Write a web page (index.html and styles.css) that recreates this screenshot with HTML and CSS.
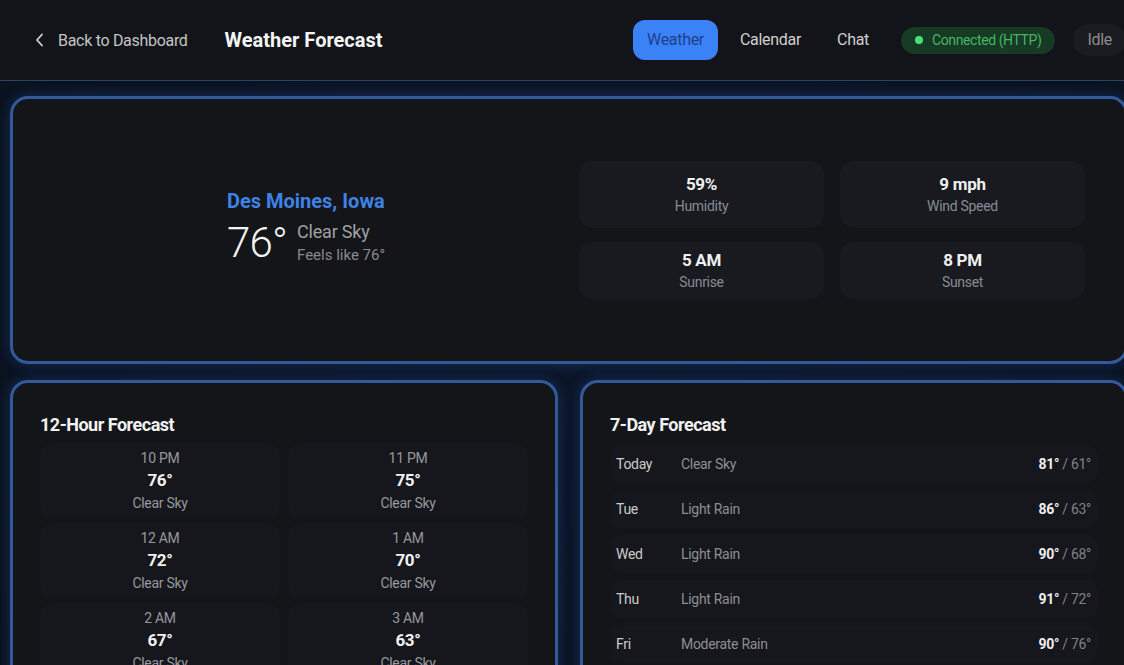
FILE: index.html
```html
<!DOCTYPE html>
<html lang="en">
<head>
<meta charset="utf-8">
<title>Weather Forecast</title>
<link rel="stylesheet" href="styles.css">
</head>
<body>
<div class="page">
  <header class="topbar">
    <div class="left">
      <a class="back" href="#">
        <svg class="chev" width="9" height="14" viewBox="0 0 9 14"><path d="M7 1.5 L2 7 L7 12.5" fill="none" stroke="#d4d4d4" stroke-width="1.8" stroke-linecap="round" stroke-linejoin="round"/></svg>
        <span>Back to Dashboard</span>
      </a>
      <h1 class="title">Weather Forecast</h1>
    </div>
    <div class="right">
      <nav class="tabs">
        <a class="tab active" href="#">Weather</a>
        <a class="tab" href="#">Calendar</a>
        <a class="tab" href="#">Chat</a>
      </nav>
      <span class="conn"><span class="dot"></span>Connected (HTTP)</span>
      <span class="idle">Idle</span>
    </div>
  </header>

  <main class="main">
    <section class="card current">
      <div class="loc-col">
        <div class="loc">
          <div class="city">Des Moines, Iowa</div>
          <div class="temp-row">
            <div class="big-temp">76°</div>
            <div class="cond">
              <div class="cond-main">Clear Sky</div>
              <div class="feels">Feels like 76°</div>
            </div>
          </div>
        </div>
      </div>
      <div class="stats">
        <div class="stat"><div class="sv">59%</div><div class="sl">Humidity</div></div>
        <div class="stat"><div class="sv">9 mph</div><div class="sl">Wind Speed</div></div>
        <div class="stat"><div class="sv">5 AM</div><div class="sl">Sunrise</div></div>
        <div class="stat"><div class="sv">8 PM</div><div class="sl">Sunset</div></div>
      </div>
    </section>

    <div class="lower">
      <section class="card panel">
        <h2 class="ptitle">12-Hour Forecast</h2>
        <div class="hours">
          <div class="hour"><div class="ht">10 PM</div><div class="hv">76°</div><div class="hd">Clear Sky</div></div>
          <div class="hour"><div class="ht">11 PM</div><div class="hv">75°</div><div class="hd">Clear Sky</div></div>
          <div class="hour"><div class="ht">12 AM</div><div class="hv">72°</div><div class="hd">Clear Sky</div></div>
          <div class="hour"><div class="ht">1 AM</div><div class="hv">70°</div><div class="hd">Clear Sky</div></div>
          <div class="hour"><div class="ht">2 AM</div><div class="hv">67°</div><div class="hd">Clear Sky</div></div>
          <div class="hour"><div class="ht">3 AM</div><div class="hv">63°</div><div class="hd">Clear Sky</div></div>
        </div>
      </section>
      <section class="card panel">
        <h2 class="ptitle">7-Day Forecast</h2>
        <div class="days">
          <div class="day"><span class="dn">Today</span><span class="dd">Clear Sky</span><span class="dt"><b>81°</b> / 61°</span></div>
          <div class="day"><span class="dn">Tue</span><span class="dd">Light Rain</span><span class="dt"><b>86°</b> / 63°</span></div>
          <div class="day"><span class="dn">Wed</span><span class="dd">Light Rain</span><span class="dt"><b>90°</b> / 68°</span></div>
          <div class="day"><span class="dn">Thu</span><span class="dd">Light Rain</span><span class="dt"><b>91°</b> / 72°</span></div>
          <div class="day"><span class="dn">Fri</span><span class="dd">Moderate Rain</span><span class="dt"><b>90°</b> / 76°</span></div>
          <div class="day"><span class="dn">Sat</span><span class="dd">Light Rain</span><span class="dt"><b>88°</b> / 70°</span></div>
        </div>
      </section>
    </div>
  </main>
</div>
</body>
</html>
```

FILE: styles.css
```css
html, body {
  margin: 0;
  padding: 0;
  overflow: hidden;
  height: 100%;
}
body {
  background: #0b1322;
  font-family: Roboto, "Liberation Sans", Arial, sans-serif;
  color: #e6e6e6;
  letter-spacing: -0.3px;
}
.page {
  width: 1138px;
  min-height: 100%;
  background: radial-gradient(ellipse at 50% 40%, #0c1628 0%, #0a111d 100%);
}
.topbar {
  height: 80px;
  background: #131419;
  border-bottom: 1px solid #2c4263;
  display: flex;
  align-items: center;
  justify-content: space-between;
  padding: 0 12px 0 35px;
}
.left {
  display: flex;
  align-items: center;
  gap: 37px;
}
.back {
  display: flex;
  align-items: center;
  gap: 14px;
  color: #c4c4c4;
  text-decoration: none;
  font-size: 16px;
}
.chev { display: block; }
.title {
  margin: 0;
  font-size: 20px;
  font-weight: 700;
  color: #f5f5f5;
  letter-spacing: 0;
}
.right {
  display: flex;
  align-items: center;
  gap: 18px;
}
.tabs {
  display: flex;
  gap: 8px;
}
.tab {
  height: 40px;
  line-height: 40px;
  padding: 0 14px;
  border-radius: 12px;
  color: #cfcfcf;
  text-decoration: none;
  font-size: 16px;
}
.tab.active {
  background: #3b82f6;
  color: #1e3f8f;
}
.conn {
  display: flex;
  align-items: center;
  gap: 9px;
  height: 27px;
  padding: 0 14px;
  border-radius: 14px;
  background: #163a23;
  color: #46b463;
  font-size: 14px;
  letter-spacing: -0.4px;
}
.dot {
  width: 8px;
  height: 8px;
  border-radius: 50%;
  background: #4ade80;
}
.idle {
  height: 32px;
  line-height: 32px;
  padding: 0 14px;
  border-radius: 16px;
  background: #1a1c21;
  color: #8c8c8c;
  font-size: 16px;
}
.main {
  padding: 15px 10px;
  display: flex;
  flex-direction: column;
  gap: 16px;
}
.card {
  background: #141519;
  border: 3px solid #33599a;
  border-radius: 18px;
  box-shadow: 0 0 14px rgba(40, 95, 190, 0.35);
  box-sizing: border-box;
}
.current {
  height: 268px;
  display: grid;
  grid-template-columns: 1fr 1fr;
  gap: 20px;
  padding: 0 40px;
  align-items: center;
}
.loc-col {
  display: flex;
  justify-content: center;
  margin-top: -6px;
}
.city {
  font-size: 20px;
  font-weight: 700;
  color: #3f82e6;
  line-height: 26px;
  margin-bottom: 7px;
  letter-spacing: 0;
}
.temp-row {
  display: flex;
  align-items: flex-start;
  gap: 10px;
}
.big-temp {
  font-size: 42px;
  font-weight: 300;
  line-height: 44px;
  color: #f2f2f2;
  letter-spacing: -0.8px;
}
.cond-main {
  font-size: 18px;
  color: #a0a0a4;
  line-height: 22px;
  letter-spacing: -0.2px;
}
.feels {
  font-size: 15px;
  color: #8a8a8e;
  line-height: 24px;
  letter-spacing: 0;
}
.stats {
  display: grid;
  grid-template-columns: 1fr 1fr;
  grid-template-rows: 67px 57px;
  gap: 14px 16px;
}
.stat {
  background: #181a1f;
  border-radius: 14px;
  display: flex;
  flex-direction: column;
  align-items: center;
  justify-content: center;
}
.sv {
  font-size: 17px;
  font-weight: 700;
  color: #f0f0f0;
  line-height: 22px;
}
.sl {
  font-size: 14px;
  color: #878b93;
  line-height: 22px;
}
.lower {
  display: grid;
  grid-template-columns: 1fr 1fr;
  gap: 22px;
}
.panel {
  padding: 28px 27px 20px;
  height: 420px;
}
.ptitle {
  margin: 0 0 5px;
  font-size: 18px;
  font-weight: 700;
  line-height: 27px;
  color: #f2f2f2;
  letter-spacing: -0.5px;
}
.hours {
  display: grid;
  grid-template-columns: 1fr 1fr;
  gap: 5px 8px;
}
.hour {
  background: #16171c;
  border-radius: 12px;
  text-align: center;
  padding: 5px 0 4px;
}
.ht {
  font-size: 14px;
  line-height: 20px;
  color: #96989e;
}
.hv {
  font-size: 17px;
  font-weight: 700;
  line-height: 24px;
  color: #f2f2f2;
}
.hd {
  font-size: 14px;
  line-height: 22px;
  color: #96989e;
}
.days {
  display: flex;
  flex-direction: column;
  gap: 7px;
  padding-top: 2px;
}
.day {
  display: flex;
  align-items: center;
  background: #16171c;
  border-radius: 10px;
  padding: 9px 7px 9px 6px;
  font-size: 14px;
  line-height: 20px;
}
.dn {
  width: 65px;
  color: #cccccc;
}
.dd {
  flex: 1;
  color: #8c8e94;
}
.dt {
  color: #7e8188;
}
.dt b {
  color: #efefef;
  font-weight: 700;
}
```
